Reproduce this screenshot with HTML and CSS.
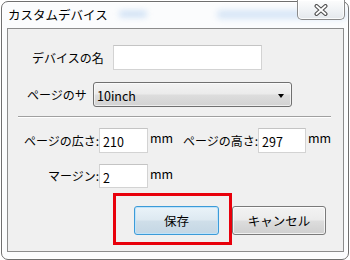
FILE: index.html
```html
<!DOCTYPE html>
<html lang="ja">
<head>
  <meta charset="UTF-8">
  <title>カスタムデバイス</title>
  <link rel="stylesheet" href="styles.css">
</head>
<body>
  <div class="window">
    <div class="titlebar">
      <span class="glow glow-a"></span>
      <span class="glow glow-b"></span>
      <span class="title">カスタムデバイス</span>
    </div>
    <div class="close-btn">
      <svg width="16" height="12" viewBox="0 0 16 12">
        <path d="M3.5 2 L12.5 10 M12.5 2 L3.5 10" stroke="#505050" stroke-width="4" stroke-linecap="round" fill="none"/>
        <path d="M3.5 2 L12.5 10 M12.5 2 L3.5 10" stroke="#fff" stroke-width="1.8" stroke-linecap="round" fill="none"/>
      </svg>
    </div>

    <div class="client">
      <div class="row row-name">
        <label class="lbl lbl-name">デバイスの名</label>
        <input type="text" class="field field-name">
      </div>
      <div class="row row-size">
        <label class="lbl lbl-size">ページのサ</label>
        <div class="combo">
          <span>10inch</span>
          <span class="arrow"></span>
        </div>
      </div>

      <div class="separator"></div>

      <div class="row row-dim">
        <label class="lbl lbl-right">ページの広さ:</label>
        <input type="text" class="field field-num" value="210">
        <span class="unit">mm</span>
        <label class="lbl lbl-right lbl-height">ページの高さ:</label>
        <input type="text" class="field field-num field-narrow" value="297">
        <span class="unit">mm</span>
      </div>
      <div class="row row-margin">
        <label class="lbl lbl-right">マージン:</label>
        <input type="text" class="field field-num field-short" value="2">
        <span class="unit">mm</span>
      </div>

      <div class="buttons">
        <div class="highlight">
          <button class="btn btn-save">保存</button>
        </div>
        <button class="btn btn-cancel">キャンセル</button>
      </div>
    </div>
  </div>
</body>
</html>
```

FILE: styles.css
```css
body {
  margin: 0;
  background: #fff;
  font-family: "Noto Sans CJK JP", "Noto Sans", sans-serif;
  font-size: 12px;
  color: #000;
}
.window {
  position: relative;
  box-sizing: border-box;
  margin: 1px 0 0 1px;
  width: 348px;
  height: 259px;
  padding: 0 4px 7px 5px;
  border: 1px solid #6f6f6f;
  border-radius: 7px;
  background: #fbfcfd;
  box-shadow: inset 0 0 0 1px #fff;
}
.titlebar {
  position: relative;
  height: 26px;
  display: flex;
  align-items: center;
  padding-left: 1px;
}
.title {
  position: relative;
  font-size: 12.5px;
  line-height: 16px;
  margin-top: -1px;
}
.glow {
  position: absolute;
  background: #b4d0f0;
  filter: blur(3px);
  border-radius: 4px;
  opacity: 0.7;
}
.glow-a {
  left: 112px;
  top: 9px;
  width: 28px;
  height: 6px;
}
.glow-b {
  left: 210px;
  top: 8px;
  width: 130px;
  height: 9px;
  opacity: 0.5;
}
.close-btn {
  position: absolute;
  top: -2px;
  right: 3px;
  width: 46px;
  height: 19px;
  border: 1px solid #8a8a8a;
  border-top: none;
  border-radius: 0 0 5px 5px;
  background: linear-gradient(#fdfdfd, #eef1f4 60%, #e4e8ec);
  box-shadow: inset 0 0 0 1px rgba(255,255,255,0.8);
  display: flex;
  align-items: center;
  justify-content: center;
}
.client {
  box-sizing: border-box;
  height: 224px;
  border: 1px solid #8c8c8c;
  background: #f0f0f0;
  padding-top: 16px;
  display: flex;
  flex-direction: column;
}
.row {
  display: flex;
  align-items: center;
}
.lbl {
  line-height: 16px;
  white-space: nowrap;
}
.row-name {
  padding-left: 24px;
}
.lbl-name {
  width: 81px;
}
.field {
  box-sizing: border-box;
  height: 25px;
  border: 1px solid #d3d3d3;
  border-top-color: #c4c4c4;
  background: #fff;
  font-family: "Noto Sans CJK JP", "Noto Sans", sans-serif;
  font-size: 12.5px;
  padding: 2px 3px 0;
  margin: 0;
  outline: none;
}
.field-name {
  width: 149px;
}
.row-size {
  margin-top: 12px;
  padding-left: 19px;
}
.lbl-size {
  width: 66px;
}
.combo {
  box-sizing: border-box;
  width: 199px;
  height: 25px;
  border: 1px solid #707070;
  border-radius: 3px;
  background: linear-gradient(#f3f3f3, #ebebeb 48%, #dddddd 52%, #d2d2d2);
  box-shadow: inset 0 0 0 1px rgba(255,255,255,0.6);
  display: flex;
  align-items: center;
  justify-content: space-between;
  padding: 1px 7px 0 3px;
  font-size: 12.5px;
}
.arrow {
  width: 0;
  height: 0;
  border-left: 3.5px solid transparent;
  border-right: 3.5px solid transparent;
  border-top: 4px solid #000;
  margin-top: 1px;
}
.separator {
  margin: 9px 0 0 10px;
  width: 313px;
  height: 0;
  border-top: 1px solid #a0a0a0;
  border-bottom: 1px solid #fff;
}
.row-dim {
  margin-top: 10px;
  padding-left: 14px;
}
.lbl-right {
  width: 77px;
  text-align: right;
}
.lbl-height {
  width: 78px;
  margin-left: 8px;
}
.field-num {
  width: 49px;
}
.field-narrow {
  width: 48px;
}
.field-short {
  height: 24px;
}
.unit {
  margin-left: 2px;
  font-size: 12.5px;
  line-height: 16px;
  width: 22px;
  margin-top: -5px;
}
.row-margin {
  margin-top: 11px;
  padding-left: 14px;
}
.buttons {
  margin-top: 5px;
  padding-left: 105px;
  display: flex;
  align-items: flex-start;
}
.highlight {
  box-sizing: border-box;
  width: 119px;
  height: 52px;
  border: 3px solid #e8000b;
  padding: 10px 0 0 18px;
}
.btn {
  box-sizing: border-box;
  height: 29px;
  border-radius: 3px;
  font-family: "Noto Sans CJK JP", "Noto Sans", sans-serif;
  font-size: 12.5px;
  color: #000;
  padding: 0;
  margin: 0;
}
.btn-save {
  width: 85px;
  border: 1px solid #3c9bd8;
  background: linear-gradient(#eaf3f9, #dde9f1 48%, #cfdee9 52%, #c4d7e4);
  box-shadow: inset 0 0 0 1px #bfe3fa;
}
.btn-cancel {
  margin-top: 13px;
  width: 94px;
  border: 1px solid #7a7a7a;
  background: linear-gradient(#f3f3f3, #ebebeb 48%, #dddddd 52%, #cfcfcf);
  box-shadow: inset 0 0 0 1px rgba(255,255,255,0.7);
}
```
